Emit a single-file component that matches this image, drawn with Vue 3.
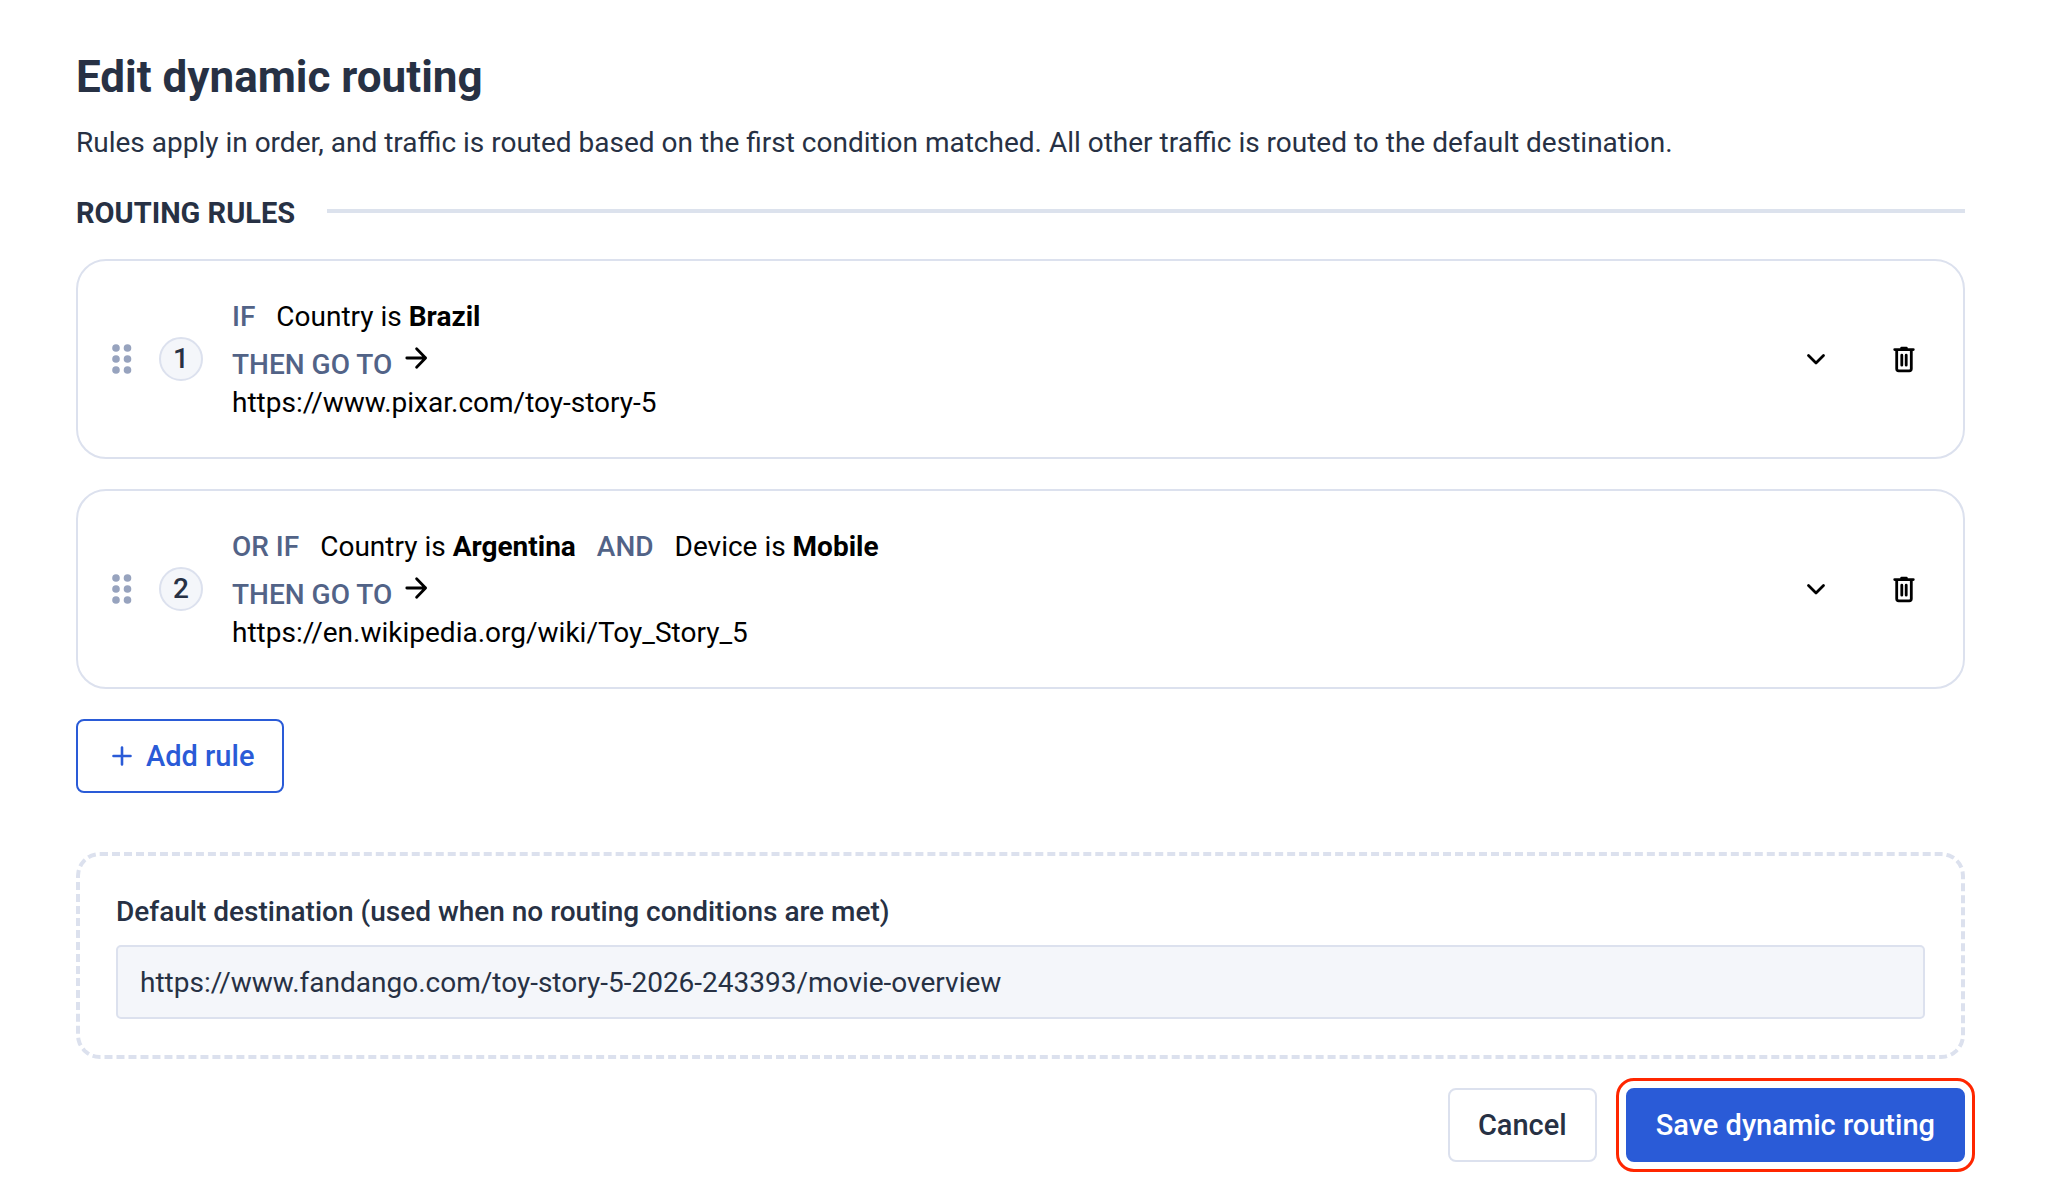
<script setup>
import { ref } from "vue";

const rules = ref([
  {
    id: 1,
    prefix: "IF",
    conditions: [{ field: "Country", value: "Brazil" }],
    url: "https://www.pixar.com/toy-story-5",
  },
  {
    id: 2,
    prefix: "OR IF",
    conditions: [
      { field: "Country", value: "Argentina" },
      { field: "Device", value: "Mobile" },
    ],
    url: "https://en.wikipedia.org/wiki/Toy_Story_5",
  },
]);

const defaultUrl = ref("https://www.fandango.com/toy-story-5-2026-243393/movie-overview");

function removeRule(id) {
  rules.value = rules.value.filter((rule) => rule.id !== id);
}
</script>

<template>
  <form class="routing" @submit.prevent>
    <h1 class="title">Edit dynamic routing</h1>
    <p class="intro">
      Rules apply in order, and traffic is routed based on the first condition matched. All other traffic is routed to the default destination.
    </p>

    <h2 class="section-title">ROUTING RULES</h2>

    <ol class="rules">
      <li v-for="(rule, index) in rules" :key="rule.id" class="rule">
        <svg class="handle" viewBox="0 0 20 30" aria-hidden="true">
          <circle cx="4" cy="4" r="3.8" />
          <circle cx="15.5" cy="4" r="3.8" />
          <circle cx="4" cy="15" r="3.8" />
          <circle cx="15.5" cy="15" r="3.8" />
          <circle cx="4" cy="26" r="3.8" />
          <circle cx="15.5" cy="26" r="3.8" />
        </svg>
        <span class="rule-number">{{ index + 1 }}</span>

        <div class="rule-body">
          <div class="conditions">
            <span class="keyword">{{ rule.prefix }}</span>
            <template v-for="(condition, i) in rule.conditions" :key="condition.field">
              <span v-if="i > 0" class="keyword">AND</span>
              <span>{{ condition.field }} is <strong>{{ condition.value }}</strong></span>
            </template>
          </div>
          <div class="target">
            <span class="keyword">THEN GO TO</span>
            <svg class="arrow" viewBox="0 0 24 24" aria-hidden="true">
              <path d="M2.8 12H21.6M12.6 2.8L21.6 12L12.6 21.2" />
            </svg>
          </div>
          <div class="url">{{ rule.url }}</div>
        </div>

        <button type="button" class="icon-button" aria-label="Expand rule">
          <svg viewBox="0 0 30 30" aria-hidden="true">
            <path d="M7.5 11.5L15 19L22.5 11.5" />
          </svg>
        </button>
        <button type="button" class="icon-button" aria-label="Delete rule" @click="removeRule(rule.id)">
          <svg viewBox="0 0 30 30" aria-hidden="true">
            <path d="M5.7 5.6H24.3M12.6 4.2H17.4M7.7 5.6V24.8Q7.7 26.8 9.7 26.8H20.3Q22.3 26.8 22.3 24.8V5.6M12.8 11.2V21.2M17.2 11.2V21.2" />
          </svg>
        </button>
      </li>
    </ol>

    <button type="button" class="button button-outline">
      <svg class="plus" viewBox="0 0 20 20" aria-hidden="true">
        <path d="M10 1.5V18.5M1.5 10H18.5" />
      </svg>
      Add rule
    </button>

    <div class="default-box">
      <label for="default-url">Default destination (used when no routing conditions are met)</label>
      <input id="default-url" v-model="defaultUrl" type="text" readonly />
    </div>

    <div class="actions">
      <button type="button" class="button">Cancel</button>
      <button type="submit" class="button button-primary">Save dynamic routing</button>
    </div>
  </form>
</template>

<style>
body {
  margin: 0;
  background: #fff;
}
</style>

<style scoped>
.routing {
  box-sizing: border-box;
  padding: 49px 83px 40px 76px;
  font-family: Roboto, "Liberation Sans", sans-serif;
  font-size: 28px;
  line-height: 38px;
  color: #273144;
}

.title {
  margin: 0 0 19px;
  font-size: 44px;
  line-height: 56px;
  font-weight: 700;
}

.intro {
  margin: 0;
}

.section-title {
  display: flex;
  align-items: center;
  gap: 32px;
  margin: 32px 0 27px;
  font-size: 29px;
  font-weight: 700;
}

.section-title::after {
  content: "";
  flex: 1;
  height: 4px;
  margin-bottom: 4px;
  background: #dce2ed;
}

.rules {
  display: flex;
  flex-direction: column;
  gap: 30px;
  margin: 0 0 30px;
  padding: 0;
  list-style: none;
}

.rule {
  display: flex;
  align-items: center;
  padding: 35px 44px 35px 34px;
  border: 2px solid #dce1ee;
  border-radius: 30px;
  color: #000;
}

.handle {
  width: 20px;
  height: 30px;
  fill: #97a3be;
}

.rule-number {
  display: flex;
  align-items: center;
  justify-content: center;
  box-sizing: border-box;
  width: 44px;
  height: 44px;
  margin: 0 29px 0 27px;
  border: 2px solid #dce1ee;
  border-radius: 50%;
  background: #f4f6fa;
  color: #273144;
  font-weight: 500;
}

.rule-body {
  flex: 1;
  min-width: 0;
  padding-top: 2px;
}

.conditions {
  display: flex;
  flex-wrap: wrap;
  gap: 0 21px;
  margin-bottom: 10px;
}

.keyword {
  color: #526387;
  font-weight: 500;
}

.target {
  display: flex;
  gap: 12px;
}

.arrow {
  width: 24px;
  height: 24px;
  fill: none;
  stroke: #000;
  stroke-width: 2.8;
  stroke-linecap: round;
  stroke-linejoin: round;
}

.url {
  overflow-wrap: anywhere;
}

.icon-button {
  display: flex;
  margin-left: 58px;
  padding: 0;
  border: 0;
  background: none;
  cursor: pointer;
}

.icon-button svg {
  width: 30px;
  height: 30px;
  fill: none;
  stroke: #000;
  stroke-width: 2.8;
  stroke-linecap: round;
  stroke-linejoin: round;
}

.button {
  display: flex;
  align-items: center;
  gap: 14px;
  padding: 16px 28px;
  border: 2px solid #dce1ee;
  border-radius: 8px;
  background: #fff;
  color: #273144;
  font: inherit;
  font-size: 29px;
  font-weight: 500;
  cursor: pointer;
}

.button-outline {
  padding-left: 34px;
  border-color: #2a5bd7;
  color: #2a5bd7;
}

.plus {
  width: 20px;
  height: 20px;
  fill: none;
  stroke: currentColor;
  stroke-width: 2.6;
  stroke-linecap: round;
}

.button-primary {
  border-color: #2a5bd7;
  background: #2a5bd7;
  color: #fff;
  outline: 3px solid #ff2600;
  outline-offset: 7px;
}

.default-box {
  margin: 59px 0 29px;
  padding: 37px 36px 36px;
  border: 4px dashed #dce1ee;
  border-radius: 24px;
}

.default-box label {
  display: block;
  margin-bottom: 14px;
  font-weight: 500;
}

.default-box input {
  display: block;
  box-sizing: border-box;
  width: 100%;
  height: 74px;
  padding: 0 22px;
  border: 2px solid #dce1ee;
  border-radius: 5px;
  background: #f4f6fa;
  color: #273144;
  font: inherit;
}

.actions {
  display: flex;
  justify-content: flex-end;
  gap: 29px;
}
</style>
